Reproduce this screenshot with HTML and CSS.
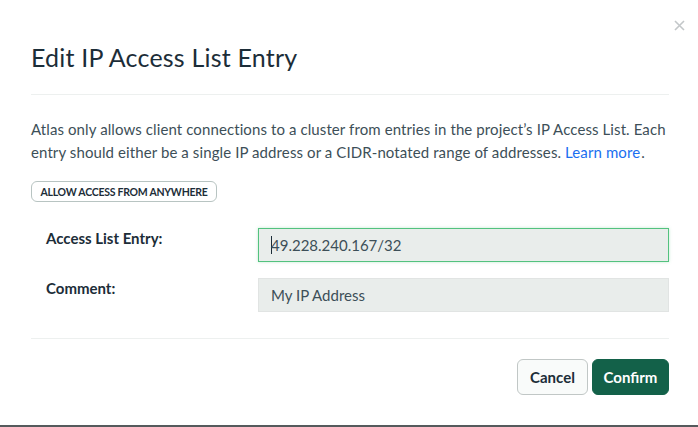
FILE: index.html
```html
<!DOCTYPE html>
<html lang="en">
<head>
<meta charset="utf-8">
<title>Edit IP Access List Entry</title>
<link rel="stylesheet" href="styles.css">
</head>
<body>
<div class="modal">
  <button class="close" aria-label="Close">
    <svg width="11" height="11" viewBox="0 0 11 11"><path d="M1 1L10 10M10 1L1 10" stroke="#c3c7c9" stroke-width="1.6" fill="none"/></svg>
  </button>
  <h1 class="title">Edit IP Access List Entry</h1>
  <p class="desc"><span class="line">Atlas only allows client connections to a cluster from entries in the project’s IP Access List. Each</span><span class="line"><span>entry should either be a single IP address or a CIDR-notated range of addresses.</span> <a class="link" href="#">Learn more</a><span class="dot">.</span></span></p>
  <button class="pill">ALLOW ACCESS FROM ANYWHERE</button>
  <div class="form">
    <div class="label">Access List Entry:</div>
    <div class="field focused"><span class="caret"></span>49.228.240.167/32</div>
    <div class="label">Comment:</div>
    <div class="field">My IP Address</div>
  </div>
  <div class="footer">
    <button class="btn cancel">Cancel</button>
    <button class="btn confirm">Confirm</button>
  </div>
</div>
</body>
</html>
```
FILE: styles.css
```css
* { box-sizing: border-box; }
html, body { margin: 0; padding: 0; background: #fff; }
body { font-family: Lato, "Noto Sans", sans-serif; color: #3d4f58; }
.modal {
  position: relative;
  height: 427px;
  padding: 0 29px 0 31px;
  border-bottom: 2px solid #555a5c;
  display: flex;
  flex-direction: column;
  align-items: flex-start;
}
.close {
  position: absolute;
  top: 20px;
  right: 13px;
  border: 0;
  background: none;
  padding: 0;
  width: 11px;
  height: 11px;
  display: flex;
}
.title {
  align-self: stretch;
  margin: 0;
  padding: 41px 0 21px;
  font-size: 25px;
  line-height: 32px;
  font-weight: 400;
  letter-spacing: 0.2px;
  color: #1c2d38;
  border-bottom: 1px solid #edf0ef;
}
.desc {
  margin: 23px 0 0;
  font-size: 15px;
  line-height: 23px;
  color: #3d4f58;
  letter-spacing: 0.1px;
}
.line { display: block; white-space: nowrap; }
.link { color: #1a6ff0; text-decoration: none; }
.dot { margin-left: 1px; }
.pill {
  margin-top: 17px;
  height: 21px;
  width: 186px;
  padding: 0;
  border: 1px solid #b8c4c2;
  border-radius: 6px;
  background: #fff;
  font-family: inherit;
  font-size: 10.5px;
  font-weight: 700;
  letter-spacing: -0.25px;
  color: #1c2d38;
}
.form {
  align-self: stretch;
  margin-top: 26px;
  display: grid;
  grid-template-columns: 227px 1fr;
  row-gap: 16px;
  padding-bottom: 26px;
  border-bottom: 1px solid #edf0ef;
}
.label {
  padding: 0 0 0 15px;
  font-size: 15px;
  line-height: 20px;
  font-weight: 700;
  color: #1c2d38;
}
.field {
  height: 34px;
  display: flex;
  align-items: center;
  padding-left: 12px;
  background: #e9edeb;
  border: 1px solid #e1e4e3;
  font-size: 15px;
  color: #3d4f58;
}
.field.focused {
  border-color: #53c27f;
  box-shadow: 0 0 3px rgba(83, 194, 127, 0.35);
}
.caret {
  width: 1px;
  height: 18px;
  background: #1c2d38;
  margin-right: -1px;
}
.footer {
  align-self: stretch;
  display: flex;
  justify-content: flex-end;
  gap: 4px;
  padding-top: 20px;
}
.btn {
  height: 36px;
  border-radius: 6px;
  font-family: inherit;
  font-size: 15px;
  font-weight: 700;
  padding: 0;
}
.cancel {
  width: 71px;
  background: #f9fbfa;
  border: 1px solid #c1c7c6;
  color: #1c2d38;
}
.confirm {
  width: 77px;
  background: #136149;
  border: 1px solid #136149;
  color: #fff;
}
```
